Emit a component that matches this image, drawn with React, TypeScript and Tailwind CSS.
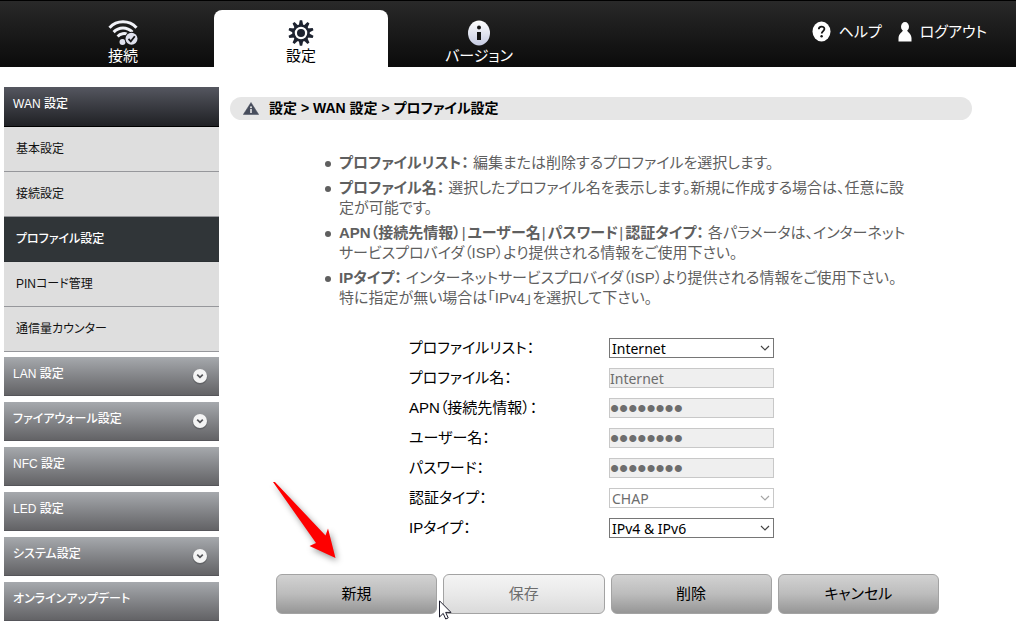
import React, { useState } from 'react';

interface MenuItem {
  title: string;
  expandable: boolean;
}

interface FieldProps {
  id: string;
  label: string;
  children: React.ReactNode;
}

interface SelectBoxProps {
  id: string;
  options: string[];
  disabled?: boolean;
}

const wanItems = ['基本設定', '接続設定', 'プロファイル設定', 'PINコード管理', '通信量カウンター'];

const menuItems: MenuItem[] = [
  { title: 'LAN 設定', expandable: true },
  { title: 'ファイアウォール設定', expandable: true },
  { title: 'NFC 設定', expandable: false },
  { title: 'LED 設定', expandable: false },
  { title: 'システム設定', expandable: true },
  { title: 'オンラインアップデート', expandable: false },
];

const WifiIcon = () => (
  <svg width="30" height="26" viewBox="0 0 30 26" fill="none" aria-hidden="true">
    <g stroke="#f1f2f8" strokeWidth="3">
      <path d="M1.5 7.700C9-.2 21-.2 28.500 7.700" />
      <path d="M5.600 12.100C11 6.500 19 6.500 24.400 12.100" />
      <path d="M9.600 16.400C12.500 13.300 17 13.100 19 14.200" />
    </g>
    <circle cx="14.500" cy="22" r="3" fill="#dfe1ee" />
    <circle cx="23.500" cy="18.800" r="7" fill="#161616" />
    <circle cx="23.500" cy="18.800" r="6" fill="#dfe1ee" />
    <path d="M20.500 18.800l2.300 2.500 4-5" stroke="#161616" strokeWidth="1.800" />
  </svg>
);

const GearIcon = () => (
  <svg width="26" height="26" viewBox="0 0 26 26" aria-hidden="true">
    <g fill="#1d2330">
      {[0, 36, 72, 108, 144, 180, 216, 252, 288, 324].map(angle => (
        <path key={angle} d="M10.800 5.500L11.800 0.300h2.400l1 5.200z" transform={`rotate(${angle} 13 13)`} />
      ))}
    </g>
    <circle cx="13" cy="13" r="7.500" fill="none" stroke="#1d2330" strokeWidth="2.500" />
    <circle cx="13" cy="13" r="4" fill="#1d2330" />
  </svg>
);

const InfoIcon = () => (
  <svg width="26" height="26" viewBox="0 0 26 26" aria-hidden="true">
    <defs>
      <linearGradient id="infoFill" x1="0" y1="0" x2="0" y2="1">
        <stop offset="0" stopColor="#ffffff" />
        <stop offset="1" stopColor="#c6cbe2" />
      </linearGradient>
    </defs>
    <ellipse cx="13" cy="13" rx="11" ry="12.500" fill="url(#infoFill)" />
    <circle cx="13" cy="7.500" r="2" fill="#151515" />
    <path d="M11 12h4v8h-4z" fill="#151515" />
  </svg>
);

const HelpIcon = () => (
  <svg width="19" height="21" viewBox="0 0 19 21" aria-hidden="true">
    <ellipse cx="9.500" cy="10.500" rx="9" ry="10" fill="#fff" />
    <path d="M6.800 8.300c0-3.600 5.600-3.600 5.600-.3 0 2-2.700 2.200-2.700 4.600" fill="none" stroke="#151515" strokeWidth="1.800" />
    <circle cx="9.600" cy="15.200" r="1.200" fill="#151515" />
  </svg>
);

const UserIcon = () => (
  <svg width="14" height="20" viewBox="0 0 14 20" fill="#fff" aria-hidden="true">
    <ellipse cx="7" cy="4.700" rx="4" ry="4.700" />
    <path d="M5 8h4c.2 2.200 4.300 3.300 4.500 8v3.500H.5V16C.7 11.300 4.800 10.200 5 8z" />
  </svg>
);

const WarningIcon = () => (
  <svg width="16" height="13" viewBox="0 0 16 13" aria-hidden="true">
    <path d="M8 0.500L15.700 12.500H.3z" fill="#474d5c" stroke="#474d5c" strokeWidth=".5" strokeLinejoin="round" />
    <circle cx="8" cy="5.300" r="1" fill="#e6e6e6" />
    <path d="M7.200 7h1.600v4H7.200z" fill="#e6e6e6" />
  </svg>
);

const ExpandIcon = () => (
  <svg width="16" height="17" viewBox="0 0 16 17" fill="none" aria-hidden="true">
    <circle cx="8" cy="9" r="7.500" fill="#55565a" opacity=".6" />
    <circle cx="8" cy="8" r="7" fill="#f4f4f4" />
    <path d="M5.200 6.700L8 9.300l2.800-2.600" stroke="#55565a" strokeWidth="1.800" />
  </svg>
);

const ArrowMark = () => (
  <svg
    className="absolute bottom-full left-0 -ml-1 mb-2 drop-shadow-[2px_3px_3px_rgba(0,0,0,0.4)] pointer-events-none"
    width="66" height="84" viewBox="0 0 66 84" aria-hidden="true"
  >
    <path d="M1 0L2.500-.5 53.500 53.500 56 46.500 63.500 76 37.500 64 44 61Z" fill="#fe0000" />
  </svg>
);

const Cursor = () => (
  <svg className="absolute left-full top-6 ml-0.5 mt-0.5 z-10 pointer-events-none" width="13" height="20" viewBox="0 0 13 20" aria-hidden="true">
    <path d="M.5.800v16.200l3.700-3.600 2.500 5.600 2.500-1.100-2.500-5.500h5.300z" fill="#fff" stroke="#1a1a2a" />
  </svg>
);

const Divider = () => <span className="ml-px mr-0.5">|</span>;

const Field = ({ id, label, children }: FieldProps) => (
  <div className="flex items-center h-[30px]">
    <label htmlFor={id} className="w-[200px] text-black">{label}</label>
    {children}
  </div>
);

const SelectBox = ({ id, options, disabled }: SelectBoxProps) => (
  <div className="relative w-[165px] h-5">
    <select
      id={id}
      disabled={disabled}
      className="block w-full h-full appearance-none bg-white border border-[#767676] pl-0.5 pt-px leading-[18px] text-black font-['Noto_Sans',sans-serif] text-[14px] disabled:border-[#c8c8c8] disabled:text-[#6d6d6d] disabled:opacity-100"
    >
      {options.map(option => <option key={option}>{option}</option>)}
    </select>
    <svg className="absolute right-1 top-1.5 pointer-events-none" width="10" height="8" viewBox="0 0 10 8" fill="none" aria-hidden="true">
      <path d="M1 2l4 4 4-4" stroke={disabled ? '#a5a5a5' : '#444'} strokeWidth="1.200" />
    </svg>
  </div>
);

const inputClass = "w-[165px] h-5 border border-[#c8c8c8] bg-[#efefef] pt-px text-[#6d6d6d]";
const textClass = "font-['Noto_Sans',sans-serif] text-[14px]";
const secretClass = "font-['Liberation_Sans',sans-serif] text-[26px] leading-[18px]";
const buttonClass = "w-full h-10 rounded-md border border-[#a3a3a3] bg-linear-to-b from-[#d2d2d2] via-[#bcbcbc] to-[#969696] text-black disabled:from-[#f4f4f4] disabled:via-[#e9e9e9] disabled:to-[#dadada] disabled:text-[#6d6d6d]";

const Header = () => (
  <header className="flex justify-between h-[67px] border-t border-black bg-linear-to-b from-[#292929] to-[#0b0b0b] text-white text-[15px] leading-5">
    <nav className="flex items-end gap-1 pl-9">
      <a href="#connect" className="flex flex-col items-center w-[174px] h-[57px] pt-2.5">
        <WifiIcon />
        <span>接続</span>
      </a>
      <a href="#settings" className="flex flex-col items-center w-[174px] h-[57px] pt-2.5 rounded-t-lg bg-white text-black">
        <GearIcon />
        <span>設定</span>
      </a>
      <a href="#version" className="flex flex-col items-center w-[174px] h-[57px] pt-2.5">
        <InfoIcon />
        <span>バージョン</span>
      </a>
    </nav>
    <div className="flex items-center gap-4 h-[61px] pr-[29px]">
      <a href="#help" className="flex items-center gap-2"><HelpIcon />ヘルプ</a>
      <a href="#logout" className="flex items-center gap-2"><UserIcon />ログアウト</a>
    </div>
  </header>
);

const Sidebar = () => {
  const [current, setCurrent] = useState<string>('プロファイル設定');

  return (
    <nav className="w-[215px] shrink-0 text-[12px] leading-[18px]">
      <button type="button" className="flex items-start w-full h-10 px-[9px] pt-2 border-b border-black bg-linear-to-b from-[#555760] to-[#202125] text-white font-medium">
        WAN 設定
      </button>
      <ul>
        {wanItems.map(item => (
          <li key={item}>
            <a
              href="#wan"
              onClick={() => setCurrent(item)}
              className={item === current
                ? "flex items-center h-[45px] px-3 border-b border-[#2b3033] bg-[#303538] text-white font-medium"
                : "flex items-center h-[45px] px-3 border-b border-[#96979b] bg-[#dedede] text-[#111]"}
            >
              {item}
            </a>
          </li>
        ))}
      </ul>
      <div className="flex flex-col gap-1.5 mt-[5px]">
        {menuItems.map(item => (
          <button
            key={item.title}
            type="button"
            className="flex items-start justify-between w-full h-[39px] pl-[9px] pr-[11px] pt-2 border-b border-[#55555a] bg-linear-to-b from-[#a6a9ad] to-[#636366] text-white font-medium"
          >
            {item.title}
            {item.expandable && <span className="pt-[3px]"><ExpandIcon /></span>}
          </button>
        ))}
      </div>
    </nav>
  );
};

const App = () => {
  return (
    <div className="bg-white text-[15px] leading-5 font-['Liberation_Sans','Noto_Sans_CJK_JP',sans-serif] [font-feature-settings:'palt']" lang="ja">
      <Header />
      <div className="flex gap-[11px] pt-5 pl-1 pr-11">
        <Sidebar />
        <main className="flex-1 pt-2.5">
          <h1 className="flex items-center gap-2.5 h-[23px] px-[13px] pb-px rounded-full bg-[#e6e6e6] text-[14px] font-bold text-black">
            <WarningIcon />
            設定 &gt; WAN 設定 &gt; プロファイル設定
          </h1>

          <ul className="flex flex-col gap-[5px] max-w-[680px] mt-[33px] pl-[109px] text-[#5f5f5f] [&>li]:relative">
            <li>
              <span className="absolute -left-3.5 top-2 size-1.5 rounded-full bg-[#5f5f5f]" />
              <b>プロファイルリスト：</b> 編集または削除するプロファイルを選択します。
            </li>
            <li>
              <span className="absolute -left-3.5 top-2 size-1.5 rounded-full bg-[#5f5f5f]" />
              <b>プロファイル名：</b> 選択したプロファイル名を表示します。新規に作成する場合は、任意に設<br />定が可能です。
            </li>
            <li>
              <span className="absolute -left-3.5 top-2 size-1.5 rounded-full bg-[#5f5f5f]" />
              <b>APN（接続先情報）</b><Divider /><b>ユーザー名</b><Divider /><b>パスワード</b><Divider /><b>認証タイプ：</b> 各パラメータは、インターネット<br />サービスプロバイダ（ISP）より提供される情報をご使用下さい。
            </li>
            <li>
              <span className="absolute -left-3.5 top-2 size-1.5 rounded-full bg-[#5f5f5f]" />
              <b>IPタイプ：</b> インターネットサービスプロバイダ（ISP）より提供される情報をご使用下さい。<br />特に指定が無い場合は「IPv4」を選択して下さい。
            </li>
          </ul>

          <form onSubmit={e => e.preventDefault()}>
            <div className="mt-[25px] pl-[179px]">
              <Field id="profileList" label="プロファイルリスト：">
                <SelectBox id="profileList" options={['Internet']} />
              </Field>
              <Field id="profileName" label="プロファイル名：">
                <input id="profileName" type="text" defaultValue="Internet" disabled className={`${inputClass} ${textClass}`} />
              </Field>
              <Field id="apn" label="APN（接続先情報）：">
                <input id="apn" type="password" defaultValue="internet" disabled className={`${inputClass} ${secretClass}`} />
              </Field>
              <Field id="userName" label="ユーザー名：">
                <input id="userName" type="password" defaultValue="username" disabled className={`${inputClass} ${secretClass}`} />
              </Field>
              <Field id="password" label="パスワード：">
                <input id="password" type="password" defaultValue="password" disabled className={`${inputClass} ${secretClass}`} />
              </Field>
              <Field id="authType" label="認証タイプ：">
                <SelectBox id="authType" options={['CHAP']} disabled />
              </Field>
              <Field id="ipType" label="IPタイプ：">
                <SelectBox id="ipType" options={['IPv4 & IPv6']} />
              </Field>
            </div>

            <div className="grid grid-cols-4 gap-1.5 max-w-[709px] mt-[31px] pl-[46px]">
              <div className="relative">
                <button type="submit" className={buttonClass}>新規</button>
                <ArrowMark />
                <Cursor />
              </div>
              <button type="button" disabled className={buttonClass}>保存</button>
              <button type="button" className={buttonClass}>削除</button>
              <button type="button" className={buttonClass}>キャンセル</button>
            </div>
          </form>
        </main>
      </div>
    </div>
  );
}

export default App;
